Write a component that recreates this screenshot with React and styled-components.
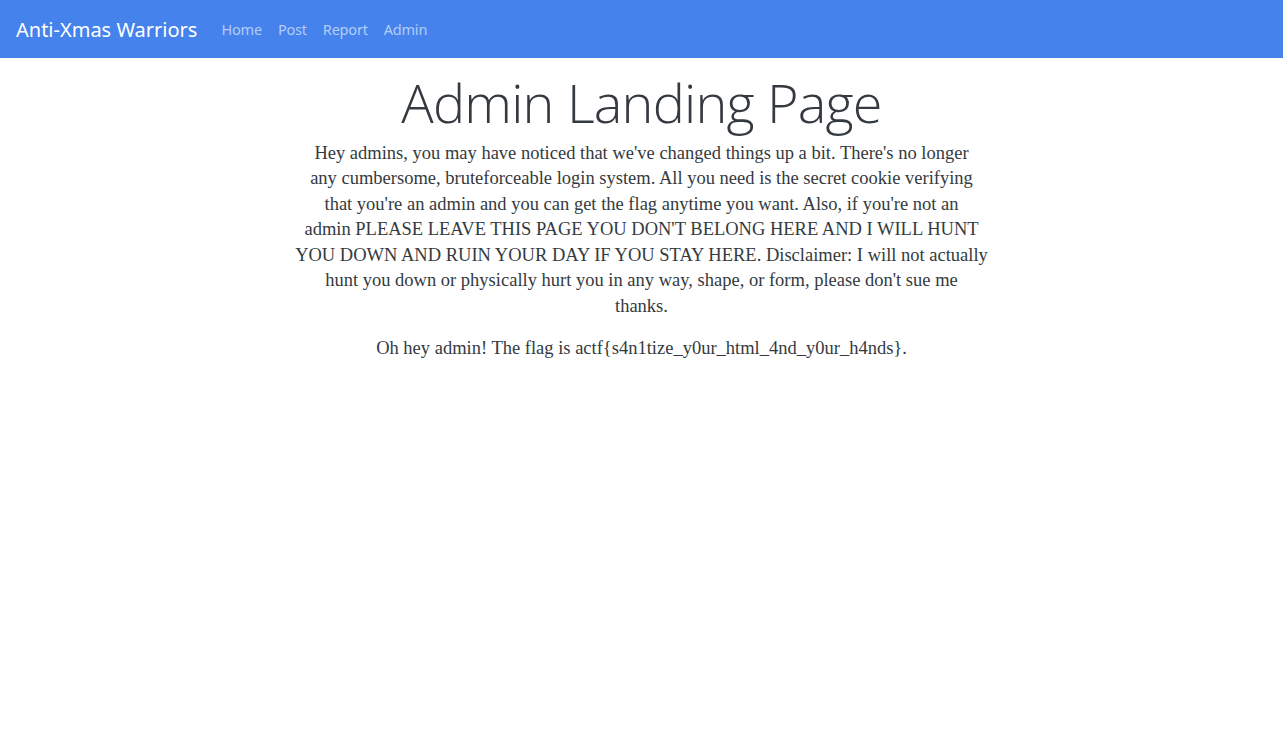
import React from 'react';
import styled, { createGlobalStyle } from 'styled-components';

const GlobalStyle = createGlobalStyle`
  body {
    margin: 0;
    background: #fff;
    color: #343a40;
    font-family: "Liberation Serif", serif;
  }
`;

const NavBar = styled.nav`
  display: flex;
  align-items: center;
  height: 58px;
  padding: 0 16px;
  background-color: #4582ec;
  font-family: "Noto Sans", "Open Sans", sans-serif;
`;

const Brand = styled.a`
  color: #fff;
  font-size: 20px;
  margin-right: 24px;
  text-decoration: none;
`;

const NavLinks = styled.div`
  display: flex;
  gap: 16px;
`;

const NavLink = styled.a`
  color: rgba(255, 255, 255, 0.6);
  font-size: 14.5px;
  text-decoration: none;
  letter-spacing: -0.2px;
`;

const Main = styled.main`
  display: flex;
  flex-direction: column;
  align-items: center;
  text-align: center;
`;

const Title = styled.h1`
  margin: 12px 0 6px;
  font-family: "Open Sans", "Noto Sans", sans-serif;
  font-weight: 300;
  font-size: 54px;
  letter-spacing: -0.8px;
  line-height: 1.2;
  color: #343a40;
`;

const Para = styled.p`
  max-width: 700px;
  margin: 0 0 16.5px;
  font-size: 18.5px;
  line-height: 25.5px;
`;

export default function App() {
  return (
    <>
      <GlobalStyle />
      <NavBar>
        <Brand href="#">Anti-Xmas Warriors</Brand>
        <NavLinks>
          <NavLink href="#">Home</NavLink>
          <NavLink href="#">Post</NavLink>
          <NavLink href="#">Report</NavLink>
          <NavLink href="#">Admin</NavLink>
        </NavLinks>
      </NavBar>
      <Main>
        <Title>Admin Landing Page</Title>
        {/* breaks follow the original's Georgia wrapping */}
        <Para>
          Hey admins, you may have noticed that we've changed things up a bit. There's no longer<br />
          any cumbersome, bruteforceable login system. All you need is the secret cookie verifying<br />
          that you're an admin and you can get the flag anytime you want. Also, if you're not an<br />
          admin PLEASE LEAVE THIS PAGE YOU DON'T BELONG HERE AND I WILL HUNT<br />
          YOU DOWN AND RUIN YOUR DAY IF YOU STAY HERE. Disclaimer: I will not actually<br />
          hunt you down or physically hurt you in any way, shape, or form, please don't sue me<br />
          thanks.
        </Para>
        <Para>Oh hey admin! The flag is actf{'{'}s4n1tize_y0ur_html_4nd_y0ur_h4nds{'}'}.</Para>
      </Main>
    </>
  );
}
